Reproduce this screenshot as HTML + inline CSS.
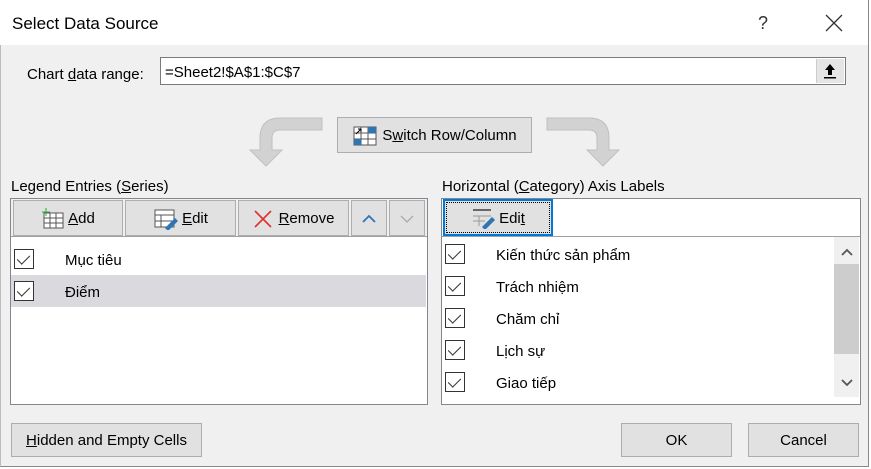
<!DOCTYPE html><html><head><meta charset="utf-8"><style>
*{margin:0;padding:0;box-sizing:border-box}
body{width:871px;height:469px;background:#fff;font-family:"Liberation Sans",sans-serif;font-size:15px;color:#000;position:relative;overflow:hidden}
.a{position:absolute}
.t{position:absolute;margin-top:1px}
.btn{position:absolute;background:#e1e1e1;border:1px solid #adadad;display:flex;align-items:center;justify-content:center;padding-top:1px}
.cb{position:absolute;width:20px;height:20px;border:1px solid #333;background:#fff}
.cb:after{content:"";position:absolute;left:5px;top:2px;width:6px;height:11px;border:solid #333;border-width:0 1.5px 1.5px 0;transform:rotate(45deg)}
u{text-decoration:underline}
</style></head><body>
<div class="a" style="left:0;top:0;width:869px;height:467px;border:1px solid #888;border-top:none;border-left:1px solid #bbb;background:#f0f0f0"></div>
<div class="a" style="left:0;top:0;width:868px;height:45px;background:#fff"></div>
<div class="t" style="left:12px;top:13px;font-size:17px">Select Data Source</div>
<div class="t" style="left:758px;top:12px;font-size:18px;color:#333">?</div>
<svg class="a" style="left:825px;top:14px" width="18" height="18"><path d="M1 1L17 17M17 1L1 17" stroke="#333" stroke-width="1.3"/></svg>

<div class="t" style="left:27px;top:65px">Chart <u>d</u>ata range:</div>
<div class="a" style="left:160px;top:57px;width:686px;height:28px;border:1px solid #7a7a7a;background:#fff"></div>
<div class="t" style="left:165px;top:63px">=Sheet2!$A$1:$C$7</div>
<div class="a" style="left:816px;top:59px;width:28px;height:24px;background:#e5e5e5;border-left:1px solid #ccc"></div>
<svg class="a" style="left:822px;top:62px" width="16" height="18"><path d="M8 2L3 8H6V13H10V8H13Z" fill="#000"/><rect x="2" y="15" width="12" height="1.5"/></svg>

<svg class="a" style="left:230px;top:112px" width="100" height="58"><path d="M92 6H50Q30 6 30 26V38H20L36 54L52 38H42V26Q42 18 50 18H92Z" fill="#d2d2d2" stroke="#c0c0c0"/></svg>
<svg class="a" style="left:545px;top:112px" width="100" height="58"><path d="M2 6H44Q64 6 64 26V38H74L58 54L42 38H52V26Q52 18 44 18H2Z" fill="#d2d2d2" stroke="#c0c0c0"/></svg>
<div class="btn" style="left:337px;top:117px;width:195px;height:36px"><svg width="26" height="22" style="margin-right:4px"><rect x="2" y="2" width="22" height="18" fill="#fff" stroke="#555"/><path d="M2 8H24M2 14H24M9 2V20M16 2V20" stroke="#555"/><rect x="2" y="14" width="7" height="6" fill="#2e75b6"/><rect x="16" y="2" width="8" height="6" fill="#2e75b6"/><path d="M4 9L9 4M9 4H6M9 4V7" stroke="#000"/></svg>S<u>w</u>itch Row/Column</div>

<div class="t" style="left:11px;top:177px">Legend Entries (<u>S</u>eries)</div>
<div class="a" style="left:10px;top:198px;width:418px;height:207px;border:1px solid #828790;background:#fff"></div>
<div class="a" style="left:11px;top:199px;width:416px;height:38px;background:#f0f0f0;border-bottom:1px solid #a0a0a0"></div>
<div class="btn" style="left:13px;top:200px;width:110px;height:36px"><svg width="24" height="22" style="margin-right:3px"><rect x="3" y="5" width="19" height="15" fill="#fff" stroke="#555"/><path d="M3 10H22M3 15H22M9 5V20M15 5V20" stroke="#555"/><path d="M5 0V8M1 4H9" stroke="#3a3"/></svg><u>A</u>dd</div>
<div class="btn" style="left:125px;top:200px;width:111px;height:36px"><svg width="26" height="22" style="margin-right:3px"><rect x="2" y="2" width="19" height="17" fill="#fff" stroke="#555"/><path d="M2 7H21M2 13H21M8 7V19" stroke="#555"/><path d="M12 20L22 10L25 13L15 23Z" fill="#2e75b6"/></svg><u>E</u>dit</div>
<div class="btn" style="left:238px;top:200px;width:111px;height:36px"><svg width="20" height="20" style="margin-right:6px"><path d="M2 2L18 18M18 2L2 18" stroke="#e03030" stroke-width="1.6"/></svg><u>R</u>emove</div>
<div class="btn" style="left:351px;top:200px;width:36px;height:36px"><svg width="14" height="10"><path d="M1 8L7 2L13 8" stroke="#2e75b6" stroke-width="1.8" fill="none"/></svg></div>
<div class="btn" style="left:389px;top:200px;width:36px;height:36px"><svg width="14" height="10"><path d="M1 2L7 8L13 2" stroke="#aaa" stroke-width="1.3" fill="none"/></svg></div>
<div class="a" style="left:11px;top:275px;width:415px;height:32px;background:#dadade"></div>
<div class="cb" style="left:14px;top:249px"></div><div class="t" style="left:65px;top:251px">Mục tiêu</div>
<div class="cb" style="left:14px;top:281px"></div><div class="t" style="left:65px;top:283px">Điểm</div>

<div class="t" style="left:442px;top:177px">Horizontal (<u>C</u>ategory) Axis Labels</div>
<div class="a" style="left:441px;top:198px;width:420px;height:207px;border:1px solid #828790;background:#fff"></div>
<div class="a" style="left:442px;top:236px;width:418px;height:1px;background:#a0a0a0"></div>
<div class="btn" style="left:443px;top:199px;width:110px;height:37px;border:2px solid #0078d7;outline:1px dotted #000;outline-offset:-4px"><svg width="26" height="22" style="margin-right:2px"><path d="M2 3H20" stroke="#666" stroke-width="2"/><path d="M2 9H20M2 14H14M8 9V19" stroke="#999"/><path d="M11 20L21 10L24 13L14 23Z" fill="#2e75b6"/></svg>Edi<u>t</u></div>
<div class="a" style="left:834px;top:237px;width:25px;height:160px;background:#f0f0f0"></div>
<div class="a" style="left:834px;top:264px;width:25px;height:90px;background:#cdcdcd"></div>
<svg class="a" style="left:840px;top:248px" width="14" height="10"><path d="M2 7L7 2L12 7" stroke="#555" stroke-width="1.8" fill="none"/></svg>
<svg class="a" style="left:840px;top:378px" width="14" height="10"><path d="M2 2L7 7L12 2" stroke="#555" stroke-width="1.8" fill="none"/></svg>
<div class="cb" style="left:445px;top:244px"></div><div class="t" style="left:496px;top:246px">Kiến thức sản phẩm</div>
<div class="cb" style="left:445px;top:276px"></div><div class="t" style="left:496px;top:278px">Trách nhiệm</div>
<div class="cb" style="left:445px;top:308px"></div><div class="t" style="left:496px;top:310px">Chăm chỉ</div>
<div class="cb" style="left:445px;top:340px"></div><div class="t" style="left:496px;top:342px">Lịch sự</div>
<div class="cb" style="left:445px;top:372px"></div><div class="t" style="left:496px;top:374px">Giao tiếp</div>

<div class="btn" style="left:11px;top:423px;width:191px;height:34px"><u>H</u>idden and Empty Cells</div>
<div class="btn" style="left:621px;top:423px;width:111px;height:34px">OK</div>
<div class="btn" style="left:748px;top:423px;width:111px;height:34px">Cancel</div>
</body></html>
